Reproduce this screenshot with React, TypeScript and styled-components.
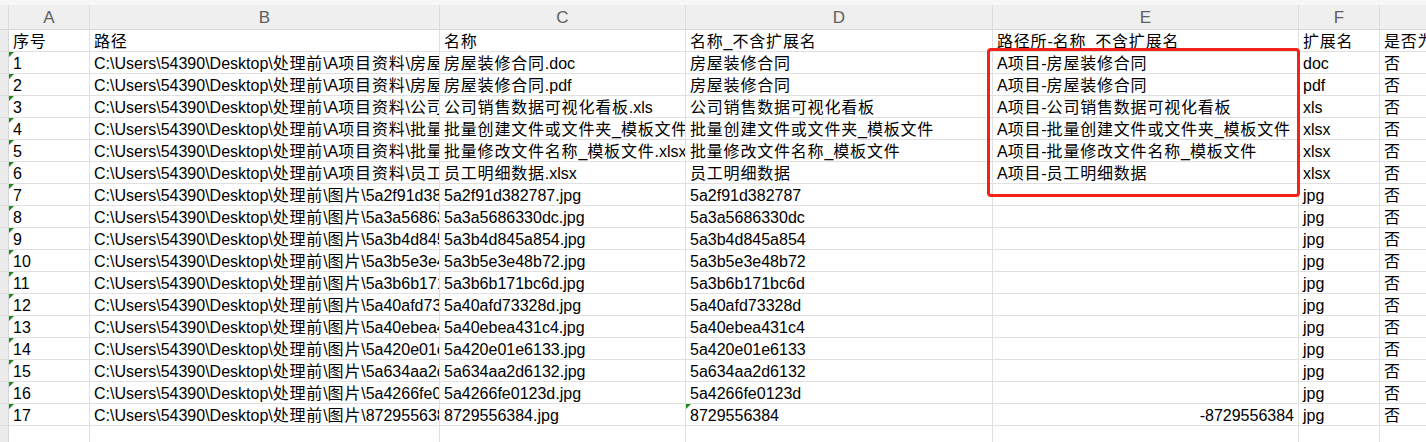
import React from 'react';
import styled, { createGlobalStyle, css } from 'styled-components';

const Global = createGlobalStyle`
  html, body {
    margin: 0;
    padding: 0;
    background: #fff;
    overflow: hidden;
  }
  body {
    font-family: "Liberation Sans", "Noto Sans CJK SC", sans-serif;
  }
`;

const Sheet = styled.div`
  position: relative;
  width: 1426px;
  height: 442px;
  overflow: hidden;
  padding-top: 5px;
  box-sizing: border-box;
  background: linear-gradient(#f7f7f7, #f7f7f7) top / 100% 5px no-repeat, #fff;
`;

const Grid = styled.div`
  display: grid;
  grid-template-columns: 9px 81px 350px 246px 307px 306px 81px 120px;
  grid-template-rows: 25px;
  grid-auto-rows: 22px;
`;

const ColHead = styled.div`
  background: #efefef;
  border-right: 1px solid #dcdcdc;
  border-bottom: 1px solid #d6d6d6;
  box-sizing: border-box;
  color: #5f5f5f;
  font-size: 17px;
  line-height: 25px;
  text-align: center;
`;

const RowHead = styled.div`
  background: #ececec;
  border-right: 1px solid #d6d6d6;
  border-bottom: 1px solid #dcdcdc;
  box-sizing: border-box;
`;

const Cell = styled.div<{ $right?: boolean; $flag?: boolean }>`
  position: relative;
  box-sizing: border-box;
  border-right: 1px solid #e0e0e0;
  border-bottom: 1px solid #e0e0e0;
  padding: 1px 4px 0 4px;
  font-size: 16px;
  line-height: 21px;
  color: #000;
  white-space: nowrap;
  overflow: hidden;
  text-align: ${(p) => (p.$right ? 'right' : 'left')};
  ${(p) =>
    p.$flag &&
    css`
      &::before {
        content: '';
        position: absolute;
        left: 0;
        top: 0;
        border-top: 5px solid #1e8a1e;
        border-right: 5px solid transparent;
      }
    `}
`;

// CJK runs sit a little wider than the Latin text in the sheet
const Han = styled.span`
  letter-spacing: 0.8px;
`;

const Highlight = styled.div`
  position: absolute;
  left: 987px;
  top: 48px;
  width: 313px;
  height: 149px;
  box-sizing: border-box;
  border: 3px solid #f3231b;
  border-radius: 4px;
  pointer-events: none;
`;

function txt(s: string) {
  return s.split(/([\u3400-\u9fff\uff00-\uffef]+)/).map((part, i) =>
    i % 2 ? <Han key={i}>{part}</Han> : part
  );
}

const base = 'C:\\Users\\54390\\Desktop\\处理前\\';

type Row = { name: string; stem: string; ext: string; dir: string; combo: string };

const docs: [string, string][] = [
  ['房屋装修合同', 'doc'],
  ['房屋装修合同', 'pdf'],
  ['公司销售数据可视化看板', 'xls'],
  ['批量创建文件或文件夹_模板文件', 'xlsx'],
  ['批量修改文件名称_模板文件', 'xlsx'],
  ['员工明细数据', 'xlsx'],
];

const pics = [
  '5a2f91d382787',
  '5a3a5686330dc',
  '5a3b4d845a854',
  '5a3b5e3e48b72',
  '5a3b6b171bc6d',
  '5a40afd73328d',
  '5a40ebea431c4',
  '5a420e01e6133',
  '5a634aa2d6132',
  '5a4266fe0123d',
  '8729556384',
];

const rows: Row[] = [
  ...docs.map(([stem, ext]) => ({
    stem,
    ext,
    name: `${stem}.${ext}`,
    dir: 'A项目资料\\',
    combo: `A项目-${stem}`,
  })),
  ...pics.map((stem) => ({
    stem,
    ext: 'jpg',
    name: `${stem}.jpg`,
    dir: '图片\\',
    combo: '',
  })),
];

const letters = ['A', 'B', 'C', 'D', 'E', 'F', 'G'];
const titles = ['序号', '路径', '名称', '名称_不含扩展名', '路径所-名称_不含扩展名', '扩展名', '是否为文件夹'];

export default function App() {
  return (
    <Sheet>
      <Global />
      <Grid>
        <ColHead />
        {letters.map((l) => (
          <ColHead key={l}>{l}</ColHead>
        ))}

        <RowHead />
        {titles.map((t) => (
          <Cell key={t}>{txt(t)}</Cell>
        ))}

        {rows.map((r, i) => {
          const last = i === rows.length - 1;
          return (
            <React.Fragment key={i}>
              <RowHead />
              <Cell $flag>{i + 1}</Cell>
              <Cell>{txt(base + r.dir + r.name)}</Cell>
              <Cell>{txt(r.name)}</Cell>
              <Cell $flag={last}>{txt(r.stem)}</Cell>
              <Cell $right={last}>{last ? '-8729556384' : txt(r.combo)}</Cell>
              <Cell>{r.ext}</Cell>
              <Cell>{txt('否')}</Cell>
            </React.Fragment>
          );
        })}

        <RowHead />
        {letters.map((l) => (
          <Cell key={'e' + l} />
        ))}
      </Grid>
      <Highlight />
    </Sheet>
  );
}
